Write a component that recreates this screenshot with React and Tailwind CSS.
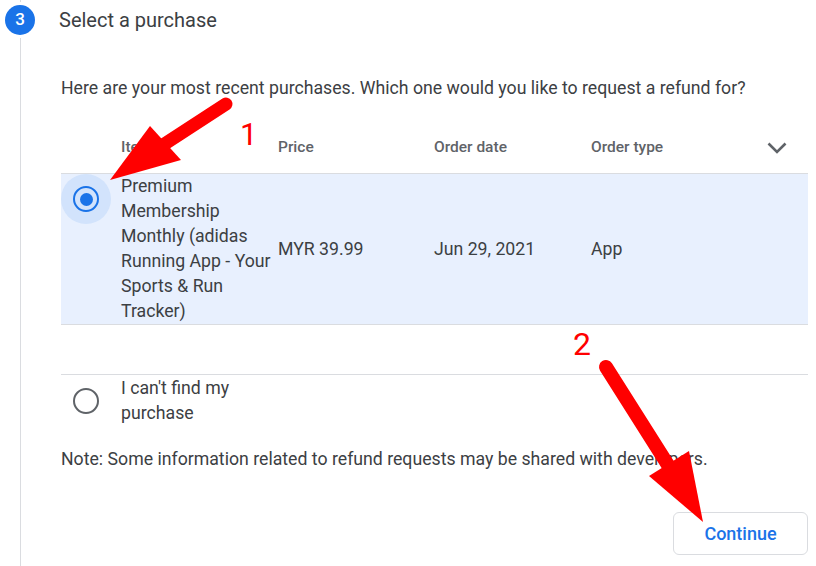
export default function App() {
	const font = { fontFamily: "Roboto, 'Liberation Sans', sans-serif" };

	return (
		<div className="relative w-[816px] h-[566px] overflow-hidden bg-white text-[#3c4043] font-['Roboto',sans-serif]">
			<div className="flex h-full">
				{/* Step rail */}
				<div className="w-10 flex flex-col items-center shrink-0">
					<div className="w-px h-[2px] bg-[#dadce0]" />
					<div className="mt-[3px] w-[30px] h-[30px] rounded-full bg-[#1a73e8] text-white text-[17px] font-medium flex items-center justify-center">
						3
					</div>
					<div className="mt-[3px] w-px flex-1 bg-[#dadce0]" />
				</div>

				{/* Step content */}
				<div className="flex-1 pr-2">
					<div className="h-10 flex items-center pl-[19px] text-[20px] text-[#3c4043]">
						Select a purchase
					</div>

					<div className="pl-[21px]">
						<p className="mt-[36px] text-[17.7px] leading-6">
							Here are your most recent purchases. Which one would you like to
							request a refund for?
						</p>

						{/* Table header */}
						<div className="mt-[23px] h-[50px] flex items-center text-[15.5px] font-medium text-[#5f6368]">
							<div className="w-[60px]" />
							<div className="w-[157px]">Item</div>
							<div className="w-[156px]">Price</div>
							<div className="w-[157px]">Order date</div>
							<div className="flex-1">Order type</div>
							<svg
								className="w-[20px] h-[12px] mr-[21px] text-[#5f6368]"
								viewBox="0 0 20 12"
								fill="none"
								stroke="currentColor"
								strokeWidth="2.6"
							>
								<path d="M1.5 1.5 10 10 18.5 1.5" />
							</svg>
						</div>

						{/* Selected row */}
						<div className="flex border-y border-[#dadce0] bg-[#e8f0fe] text-[17.7px] leading-[25px]">
							<div className="w-[60px] shrink-0">
								<div className="w-[50px] h-[50px] rounded-full bg-[#d2e3fc] flex items-center justify-center">
									<div className="w-[26px] h-[26px] rounded-full border-[2.5px] border-[#1a73e8] flex items-center justify-center">
										<div className="w-[13px] h-[13px] rounded-full bg-[#1a73e8]" />
									</div>
								</div>
							</div>
							<div className="w-[157px] shrink-0 pr-[5px]">
								Premium Membership Monthly (adidas Running App - Your Sports &amp;
								Run Tracker)
							</div>
							<div className="w-[156px] shrink-0 self-center">MYR 39.99</div>
							<div className="w-[157px] shrink-0 self-center">Jun 29, 2021</div>
							<div className="flex-1 self-center">App</div>
						</div>

						<div className="h-[50px] border-b border-[#dadce0]" />

						{/* Can't find row */}
						<div className="flex items-center h-[51px] text-[17.7px] leading-[25px]">
							<div className="w-[60px] shrink-0 flex justify-center pr-[10px]">
								<div className="w-[26px] h-[26px] rounded-full border-[2.5px] border-[#5f6368]" />
							</div>
							<div className="w-[157px] pr-[5px]">I can't find my purchase</div>
						</div>

						<p className="mt-[21px] text-[17.7px] leading-6">
							Note: Some information related to refund requests may be shared
							with developers.
						</p>

						<div className="mt-[41px] flex justify-end">
							<button className="w-[135px] h-[43px] rounded-md border border-[#dadce0] text-[#1a73e8] text-[18px] font-medium">
								Continue
							</button>
						</div>
					</div>
				</div>
			</div>

			{/* Annotation overlay */}
			<svg
				className="absolute inset-0 pointer-events-none"
				width="816"
				height="566"
				viewBox="0 0 816 566"
			>
				<line
					x1="226"
					y1="104"
					x2="163"
					y2="145"
					stroke="#ff0000"
					strokeWidth="13"
					strokeLinecap="round"
				/>
				<polygon points="150,126 181,160 110,180" fill="#ff0000" />
				<line
					x1="606"
					y1="367"
					x2="668"
					y2="465"
					stroke="#ff0000"
					strokeWidth="14"
					strokeLinecap="round"
				/>
				<polygon points="649,476 689,451 703,522" fill="#ff0000" />
			</svg>
			<span
				className="absolute left-[240px] top-[119px] text-[31px] leading-none text-[#ff0000]"
				style={font}
			>
				1
			</span>
			<span
				className="absolute left-[573px] top-[328px] text-[32px] leading-none text-[#ff0000]"
				style={font}
			>
				2
			</span>
		</div>
	);
}
